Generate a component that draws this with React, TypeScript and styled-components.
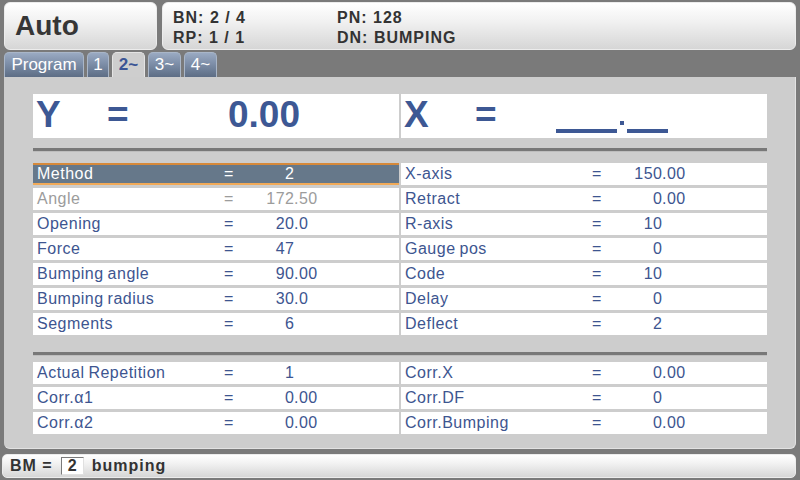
import { Fragment } from "react";
import styled, { createGlobalStyle, css } from "styled-components";

const GlobalStyle = createGlobalStyle`
  html, body {
    margin: 0;
    padding: 0;
    background: #7a7a7a;
  }
  body {
    font-family: "Liberation Sans", Arial, sans-serif;
  }
`;

const Screen = styled.div`
  width: 800px;
  height: 480px;
  overflow: hidden;
  display: flex;
  flex-direction: column;
  background: #7a7a7a;
`;

const Header = styled.div`
  display: flex;
  gap: 5px;
  padding: 2px 4px 0 4px;
  height: 48px;
`;

const glossy = css`
  box-sizing: border-box;
  border: 1px solid #ececec;
  border-radius: 6px;
  background: linear-gradient(to bottom, #ffffff 0%, #f1f1f1 40%, #d6d6d6 100%);
`;

const ModeBox = styled.div`
  ${glossy};
  width: 153px;
  display: flex;
  align-items: center;
  padding-left: 10px;
  font-size: 28px;
  font-weight: bold;
  color: #363636;
`;

const InfoBox = styled.div`
  ${glossy};
  flex: 1;
  display: grid;
  grid-template-columns: 164px 1fr;
  grid-auto-rows: 20px;
  align-content: start;
  padding: 5px 0 0 10px;
  font-size: 16px;
  font-weight: bold;
  letter-spacing: 1px;
  color: #333;
  line-height: 20px;
`;

const Tabs = styled.div`
  display: flex;
  gap: 3px;
  height: 25px;
  margin-top: 2px;
  padding-left: 4px;
`;

const Tab = styled.div<{ $w: number; $active?: boolean }>`
  box-sizing: border-box;
  width: ${(p) => p.$w}px;
  height: 25px;
  border-radius: 5px 5px 0 0;
  display: flex;
  align-items: center;
  justify-content: center;
  font-size: 17px;
  ${(p) =>
    p.$active
      ? css`
          background: #cecece;
          border: 1px solid #e4e4e4;
          border-bottom: none;
          color: #3b5595;
          font-weight: bold;
        `
      : css`
          background: linear-gradient(to bottom, #9aaac2 0%, #7d8ea8 45%, #5d6d85 100%);
          border: 1px solid #a9b6c8;
          border-bottom: none;
          color: #fff;
        `}
`;

const Panel = styled.div`
  box-sizing: border-box;
  margin: 0 4px;
  height: 372px;
  background: #cdcdcd;
  border-right: 1px solid #e2e2e2;
  border-bottom: 1px solid #e2e2e2;
  border-radius: 0 0 6px 6px;
  padding: 17px 29px 0 29px;
  display: flex;
  flex-direction: column;
`;

const Pair = styled.div<{ $gap?: number }>`
  display: grid;
  grid-template-columns: 366px 366px;
  column-gap: 2px;
  row-gap: ${(p) => p.$gap ?? 3}px;
`;

const BigCell = styled.div`
  height: 44px;
  background: #fff;
  display: grid;
  grid-template-columns: 71px 60px 133px;
  align-items: center;
  padding: 0 0 3px 3px;
  box-sizing: border-box;
  font-size: 37px;
  font-weight: bold;
  color: #3d5894;
`;

const BigValue = styled.div`
  display: flex;
  justify-content: flex-end;
`;

const Blanks = styled.div`
  display: flex;
  align-items: flex-end;
  gap: 2px;
  height: 36px;
`;

const Blank = styled.span<{ $w: number }>`
  display: inline-block;
  width: ${(p) => p.$w}px;
  height: 4px;
  background: #3d5894;
`;

const Dot = styled.span`
  display: inline-block;
  width: 4px;
  height: 4px;
  margin: 0 1px 8px 1px;
  background: #3d5894;
`;

const Divider = styled.div<{ $top: number; $bottom: number }>`
  height: 4px;
  width: 734px;
  margin: ${(p) => p.$top}px 0 ${(p) => p.$bottom}px 0;
  background: #787878;
  border-bottom: 1px solid #bdbdbd;
  box-sizing: border-box;
`;

const Row = styled.div<{ $active?: boolean; $muted?: boolean }>`
  box-sizing: border-box;
  height: 22px;
  display: grid;
  grid-template-columns: 187px 30px 40px 1fr;
  align-items: center;
  padding-left: 4px;
  font-size: 16px;
  letter-spacing: 0.5px;
  word-spacing: -1px;
  white-space: nowrap;
  background: ${(p) => (p.$active ? "#66788a" : "#fff")};
  color: ${(p) => (p.$active ? "#fff" : p.$muted ? "#9c9c9c" : "#3d5590")};
  ${(p) =>
    p.$active &&
    css`
      border-top: 2px solid #d6893a;
      border-bottom: 2px solid #f1aa58;
    `}
`;

const IntPart = styled.span`
  text-align: right;
  margin-right: -0.5px;
`;

const FracPart = styled.span`
  text-align: left;
`;

const StatusBar = styled.div`
  ${glossy};
  margin: 5px 4px 0 2px;
  height: 24px;
  border-radius: 5px;
  display: flex;
  align-items: center;
  gap: 8px;
  padding-left: 7px;
  font-size: 16px;
  font-weight: bold;
  letter-spacing: 1px;
  color: #333;
`;

const ValueBox = styled.span`
  box-sizing: border-box;
  width: 23px;
  height: 18px;
  background: #fff;
  border-top: 1px solid #7a7a7a;
  border-left: 1px solid #7a7a7a;
  border-right: 1px solid #e0e0e0;
  border-bottom: 1px solid #e0e0e0;
  display: flex;
  align-items: center;
  justify-content: center;
  letter-spacing: 0;
`;

type Param = { label: string; value: string; muted?: boolean; active?: boolean };

const mainRows: [Param, Param][] = [
  [{ label: "Method", value: "2", active: true }, { label: "X-axis", value: "150.00" }],
  [{ label: "Angle", value: "172.50", muted: true }, { label: "Retract", value: "0.00" }],
  [{ label: "Opening", value: "20.0" }, { label: "R-axis", value: "10" }],
  [{ label: "Force", value: "47" }, { label: "Gauge pos", value: "0" }],
  [{ label: "Bumping angle", value: "90.00" }, { label: "Code", value: "10" }],
  [{ label: "Bumping radius", value: "30.0" }, { label: "Delay", value: "0" }],
  [{ label: "Segments", value: "6" }, { label: "Deflect", value: "2" }],
];

const corrRows: [Param, Param][] = [
  [{ label: "Actual Repetition", value: "1" }, { label: "Corr.X", value: "0.00" }],
  [{ label: "Corr.α1", value: "0.00" }, { label: "Corr.DF", value: "0" }],
  [{ label: "Corr.α2", value: "0.00" }, { label: "Corr.Bumping", value: "0.00" }],
];

// values are aligned on the decimal point
function ParamRow({ p }: { p: Param }) {
  const dot = p.value.indexOf(".");
  const int = dot < 0 ? p.value : p.value.slice(0, dot);
  const frac = dot < 0 ? "" : p.value.slice(dot);
  return (
    <Row $active={p.active} $muted={p.muted}>
      <span>{p.label}</span>
      <span>=</span>
      <IntPart>{int}</IntPart>
      <FracPart>{frac}</FracPart>
    </Row>
  );
}

function Rows({ rows }: { rows: [Param, Param][] }) {
  return (
    <Pair>
      {rows.map(([l, r]) => (
        <Fragment key={l.label}>
          <ParamRow p={l} />
          <ParamRow p={r} />
        </Fragment>
      ))}
    </Pair>
  );
}

export default function App() {
  return (
    <Screen>
      <GlobalStyle />
      <Header>
        <ModeBox>Auto</ModeBox>
        <InfoBox>
          <span>BN: 2 / 4</span>
          <span>PN: 128</span>
          <span>RP: 1 / 1</span>
          <span>DN: BUMPING</span>
        </InfoBox>
      </Header>
      <Tabs>
        <Tab $w={80}>Program</Tab>
        <Tab $w={22}>1</Tab>
        <Tab $w={33} $active>
          2~
        </Tab>
        <Tab $w={33}>3~</Tab>
        <Tab $w={33}>4~</Tab>
      </Tabs>
      <Panel>
        <Pair $gap={0}>
          <BigCell>
            <span>Y</span>
            <span>=</span>
            <BigValue>0.00</BigValue>
          </BigCell>
          <BigCell>
            <span>X</span>
            <span>=</span>
            <BigValue>
              <Blanks>
                <Blank $w={61} />
                <Dot />
                <Blank $w={41} />
              </Blanks>
            </BigValue>
          </BigCell>
        </Pair>
        <Divider $top={10} $bottom={11} />
        <Rows rows={mainRows} />
        <Divider $top={17} $bottom={6} />
        <Rows rows={corrRows} />
      </Panel>
      <StatusBar>
        <span>BM =</span>
        <ValueBox>2</ValueBox>
        <span>bumping</span>
      </StatusBar>
    </Screen>
  );
}
